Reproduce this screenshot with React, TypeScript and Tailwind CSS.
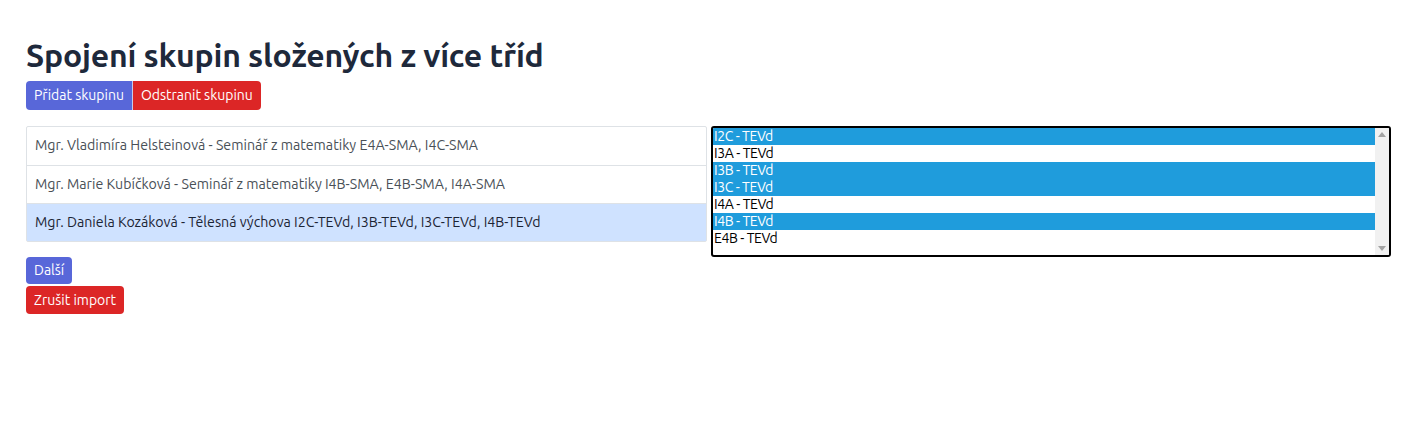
import React from "react";

const rows = [
  { text: "Mgr. Vladimíra Helsteinová - Seminář z matematiky E4A-SMA, I4C-SMA", active: false },
  { text: "Mgr. Marie Kubíčková - Seminář z matematiky I4B-SMA, E4B-SMA, I4A-SMA", active: false },
  { text: "Mgr. Daniela Kozáková - Tělesná výchova I2C-TEVd, I3B-TEVd, I3C-TEVd, I4B-TEVd", active: true },
];

const options = [
  { label: "I2C - TEVd", selected: true },
  { label: "I3A - TEVd", selected: false },
  { label: "I3B - TEVd", selected: true },
  { label: "I3C - TEVd", selected: true },
  { label: "I4A - TEVd", selected: false },
  { label: "I4B - TEVd", selected: true },
  { label: "E4B - TEVd", selected: false },
];

/**
 * Import step: merge groups made of several classes.
 */
const App = (): React.JSX.Element => {
  return (
    <div className="min-h-[448px] bg-white pl-[26px] pr-[21px] pt-[36px] text-[#1f2937] font-['Ubuntu','Noto_Sans',sans-serif]">
      <h1 className="text-[32px] leading-[38px] font-bold tracking-[-0.2px] text-[#1e293b]">
        Spojení skupin složených z více tříd
      </h1>

      {/* Group actions */}
      <div className="mt-[7px] flex">
        <button className="h-[29px] px-[8px] rounded-l-[4px] bg-[#5867d9] text-white text-[14px] border-r border-[#c7cbe9]">
          Přidat skupinu
        </button>
        <button className="h-[29px] px-[8px] rounded-r-[4px] bg-[#dc2626] text-white text-[14px]">
          Odstranit skupinu
        </button>
      </div>

      <div className="mt-[16px] flex items-start gap-[4px]">
        {/* Groups list */}
        <ul className="w-[681px] shrink-0 border border-[#dee2e6] rounded-[2px]">
          {rows.map((row, index) => (
            <li
              key={index}
              className={
                "h-[38px] flex items-center px-[8px] text-[14.2px] " +
                (index > 0 ? "border-t border-[#dee2e6] " : "") +
                (row.active ? "bg-[#cfe2ff] text-[#1c2434]" : "text-[#495057]")
              }
            >
              {row.text}
            </li>
          ))}
        </ul>

        {/* Class multi-select */}
        <div className="w-[680px] shrink-0 h-[131px] border-2 border-black rounded-[3px] flex overflow-hidden">
          <div className="flex-1">
            {options.map((opt) => (
              <div
                key={opt.label}
                className={
                  "h-[17px] leading-[17px] pl-[1px] text-[14px] tracking-[-0.4px] " +
                  (opt.selected ? "bg-[#1f9cdc] text-white" : "text-black")
                }
              >
                {opt.label}
              </div>
            ))}
          </div>
          <div className="w-[14px] bg-[#f1f1f1] flex flex-col justify-between items-center py-[4px]">
            <div className="w-0 h-0 border-l-[4px] border-r-[4px] border-b-[5px] border-l-transparent border-r-transparent border-b-[#a3a3a3]" />
            <div className="w-0 h-0 border-l-[4px] border-r-[4px] border-t-[5px] border-l-transparent border-r-transparent border-t-[#a3a3a3]" />
          </div>
        </div>
      </div>

      {/* Wizard actions */}
      <div className="flex flex-col items-start gap-[2px]">
        <button className="h-[27px] px-[8px] rounded-[4px] bg-[#5867d9] text-white text-[14px]">
          Další
        </button>
        <button className="h-[28px] px-[8px] rounded-[4px] bg-[#dc2626] text-white text-[14px]">
          Zrušit import
        </button>
      </div>
    </div>
  );
};

export default App;
